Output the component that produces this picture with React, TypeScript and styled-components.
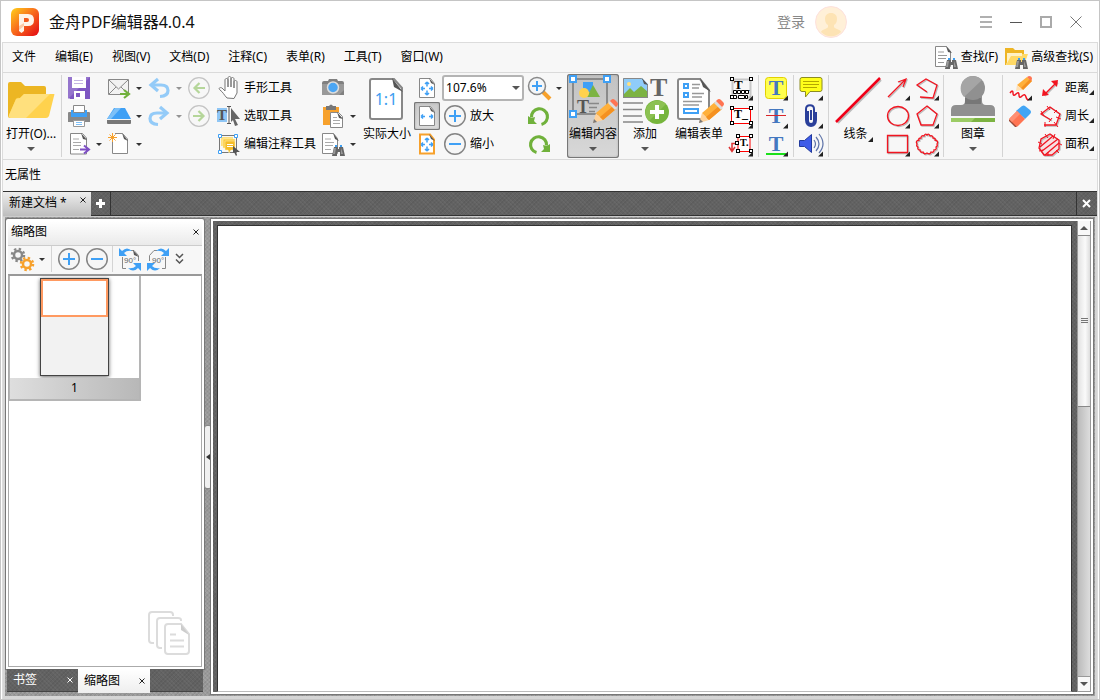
import React from "react";
import styled, { createGlobalStyle, css } from "styled-components";

const Global = createGlobalStyle`
  * { box-sizing: border-box; }
  body {
    margin: 0;
    font: 12px/16px "Noto Sans", "Noto Sans CJK SC", sans-serif;
    color: #000;
    background: #fff;
  }
  button, select {
    font: inherit;
    color: inherit;
    border: 0;
    padding: 0;
    margin: 0;
    background: none;
  }
  svg { display: block; flex: none; }
`;

const darkWeave = css`
  background:
    repeating-linear-gradient(45deg, rgba(255, 255, 255, 0.04) 0 1px, transparent 1px 3px),
    repeating-linear-gradient(-45deg, rgba(0, 0, 0, 0.06) 0 1px, transparent 1px 3px),
    #626262;
`;

const lightWeave = css`
  background:
    repeating-linear-gradient(45deg, rgba(255, 255, 255, 0.09) 0 1px, transparent 1px 3px),
    repeating-linear-gradient(-45deg, rgba(0, 0, 0, 0.07) 0 1px, transparent 1px 3px),
    #999;
`;

/* ---------- window ---------- */

const Frame = styled.div`
  display: flex;
  flex-direction: column;
  min-height: 100vh;
  border: 1px solid #c5c5c5;
  background: #fff;
`;

const TitleBar = styled.header`
  display: flex;
  align-items: center;
  height: 41px;
  padding: 0 8px 0 10px;
`;

const Title = styled.h1`
  flex: 1;
  margin: 0 0 0 10px;
  font-size: 16px;
  line-height: 24px;
  font-weight: 400;
  color: #111;
`;

const Account = styled.button`
  display: flex;
  align-items: center;
  gap: 10px;
  margin-right: 124px;
  font-size: 14px;
  line-height: 20px;
  color: #888;
`;

const WindowButton = styled.button`
  display: grid;
  place-items: center;
  width: 30px;
  height: 30px;
`;

const Body = styled.div`
  flex: 1;
  display: flex;
  flex-direction: column;
  margin: 0 1px;
  border: 1px solid #dcdcdc;
  border-bottom: 0;
`;

const MenuBar = styled.nav`
  display: flex;
  align-items: center;
  height: 30px;
  padding: 0 4px 0 9px;
  background: #f7f7f7;
  border-bottom: 1px solid #dadada;
`;

const MenuItem = styled.button`
  height: 28px;
  margin-right: 19px;
  padding-bottom: 2px;
  white-space: nowrap;
`;

const SearchButton = styled.button`
  display: flex;
  align-items: center;
  gap: 2px;
  height: 28px;
  margin-left: 5px;
  padding-bottom: 2px;
  white-space: nowrap;
`;

const Spacer = styled.div`
  flex: 1;
`;

/* ---------- ribbon ---------- */

const Ribbon = styled.div`
  display: flex;
  height: 87px;
  padding: 1px 2px 0 1px;
  background: #f7f7f7;
  border-bottom: 1px solid #dadada;
`;

const Column = styled.div<{ $gap?: number }>`
  display: flex;
  flex-direction: column;
  flex: none;
  margin-left: ${(p) => p.$gap ?? 0}px;
`;

const Row = styled.div`
  display: flex;
  align-items: center;
  height: 28px;
`;

const Tool = styled.button<{ $active?: boolean }>`
  display: flex;
  align-items: center;
  gap: 2px;
  height: 28px;
  white-space: nowrap;
  border-radius: 2px;
  ${(p) =>
    p.$active &&
    css`
      background: linear-gradient(#c9c9c9, #ddd);
      box-shadow: inset 0 0 0 1px #777, inset 0 0 3px #777;
    `}
`;

const Arrow = styled.button<{ $off?: boolean }>`
  display: grid;
  place-items: center;
  width: 14px;
  height: 28px;
  opacity: ${(p) => (p.$off ? 0.5 : 1)};
`;

const BigTool = styled.button<{ $width: number; $gap?: number; $active?: boolean }>`
  display: flex;
  flex-direction: column;
  align-items: center;
  flex: none;
  width: ${(p) => p.$width}px;
  height: 84px;
  margin-left: ${(p) => p.$gap ?? 0}px;
  white-space: nowrap;
  border-radius: 3px;
  ${(p) =>
    p.$active &&
    css`
      background: linear-gradient(#c2c2c2, #d8d8d8);
      box-shadow: inset 0 0 0 1px #777, inset 0 0 3px #888;
    `}
`;

const BigLabel = styled.span`
  display: flex;
  justify-content: center;
  align-items: flex-end;
  height: 16px;
  margin-bottom: 5px;
`;

const Divider = styled.div<{ $gap: number }>`
  flex: none;
  width: 1px;
  height: 82px;
  margin: 1px 0 0 ${(p) => p.$gap}px;
  background: #d4d4d4;
`;

const ZoomBox = styled.div`
  display: flex;
  align-items: center;
  width: 82px;
  height: 26px;
  padding-right: 2px;
  background: #fff;
  border: 2px solid #b4b4b4;
  border-radius: 3px;
`;

const ZoomSelect = styled.select`
  flex: 1;
  min-width: 0;
  appearance: none;
  padding-left: 2px;
  font-size: 12px;
  outline: 0;
`;

const PropertyBar = styled.div`
  height: 31px;
  padding: 7px 2px;
  background: #f7f7f7;
`;

/* ---------- document tabs ---------- */

const TabBar = styled.div`
  display: flex;
  height: 25px;
  padding-right: 1px;
  border-top: 1px solid #333;
  border-bottom: 1px solid #333;
  ${darkWeave}
`;

const DocTab = styled.div`
  display: flex;
  align-items: flex-start;
  justify-content: space-between;
  width: 88px;
  height: 24px;
  padding: 3px 4px 0 6px;
  background: linear-gradient(#eee, #bdbdbd);
`;

const TabLabel = styled.button`
  white-space: nowrap;
`;

const TabAction = styled.button<{ $side: "left" | "right" }>`
  display: grid;
  place-items: center;
  width: 20px;
  border-${(p) => (p.$side === "left" ? "right" : "left")}: 1px solid #333;
`;

/* ---------- workspace ---------- */

const Workspace = styled.main`
  flex: 1;
  display: flex;
  padding: 2px 4px 5px 3px;
  border-top: 1px solid #ccc;
  box-shadow: inset 2px 0 0 #d5d5d5, inset -2px -3px 0 #d5d5d5;
  ${lightWeave}
`;

const SidePanel = styled.aside`
  display: flex;
  flex-direction: column;
  width: 198px;
  margin-bottom: 2px;
`;

const PanelBox = styled.section`
  flex: 1;
  display: flex;
  flex-direction: column;
  border: 2px solid #fff;
  background: #f7f7f7;
  box-shadow: 0 0 0 1px #777;
  border-radius: 2px 2px 0 0;
`;

const PanelHeader = styled.div`
  display: flex;
  align-items: center;
  justify-content: space-between;
  height: 24px;
  padding: 0 2px 2px 3px;
  background: linear-gradient(#fff, #eaeaea);
`;

const PanelTitle = styled.h2`
  margin: 0;
  font-size: 12px;
  line-height: 16px;
  font-weight: 400;
`;

const CloseButton = styled.button`
  display: grid;
  place-items: center;
  width: 9px;
  height: 10px;
`;

const PanelTools = styled.div`
  display: flex;
  align-items: center;
  height: 29px;
  padding: 0 0 2px 1px;
  border-top: 1px solid #ccc;
`;

const ToolDivider = styled.div`
  width: 1px;
  height: 26px;
  margin: 0 4px 0 2px;
  background: #d4d4d4;
`;

const Thumbnails = styled.div`
  flex: 1;
  display: flex;
  flex-direction: column;
  align-items: flex-start;
  justify-content: space-between;
  border: 1px solid #aaa;
  border-top: 2px solid #999;
  background: #fff;
`;

const Thumb = styled.button`
  display: flex;
  flex-direction: column;
  align-items: center;
  width: 132px;
  height: 125px;
  padding-top: 2px;
  border: solid #b5b5b5;
  border-width: 0 2px 2px 1px;
`;

const ThumbPage = styled.span`
  width: 69px;
  height: 98px;
  border: 1px solid #444;
  background: #f2f2f2;
  box-shadow: 0 1px 4px rgba(0, 0, 0, 0.6);
`;

const ThumbView = styled.span`
  display: block;
  height: 38px;
  border: 2px solid #ff9a61;
  background: #fff;
`;

const ThumbNumber = styled.span`
  align-self: stretch;
  height: 21px;
  margin-top: auto;
  padding-top: 2px;
  text-align: center;
  background: linear-gradient(90deg, #dedede, #b8b8b8);
`;

const PagesMark = styled.div`
  align-self: flex-end;
  padding: 0 10px 10px 0;
`;

const SideTabs = styled.div`
  display: flex;
  height: 23px;
  margin: 0 1px;
  border-bottom: 1px solid #444;
  ${darkWeave}
`;

const SideTab = styled.div<{ $active?: boolean }>`
  display: flex;
  align-items: center;
  justify-content: space-between;
  width: ${(p) => (p.$active ? 72 : 71)}px;
  height: ${(p) => (p.$active ? 24 : 22)}px;
  padding: 0 4px 0 6px;
  color: ${(p) => (p.$active ? "#000" : "#fff")};
  background: ${(p) => (p.$active ? "linear-gradient(#fff, #eee)" : "none")};
`;

const Splitter = styled.div`
  display: flex;
  align-items: center;
  justify-content: flex-end;
  width: 7px;
`;

const SplitHandle = styled.button`
  display: grid;
  place-items: center;
  width: 6px;
  height: 62px;
  border-radius: 2px;
  background: #f0f0f0;
  box-shadow: 0 0 0 1px #888;
`;

const DocPane = styled.section`
  flex: 1;
  display: flex;
  border: 2px solid #fff;
  box-shadow: 0 0 0 1px #777;
`;

const Canvas = styled.div`
  flex: 1;
  display: flex;
  padding: 4px 5px 0 4px;
  ${darkWeave}
`;

const Page = styled.div`
  flex: 1;
  border: 1px solid #333;
  border-bottom-color: #bbb;
  background: #fff;
`;

const ScrollBar = styled.div`
  display: flex;
  flex-direction: column;
  width: 14px;
  border: 1px solid #999;
  border-top: 0;
  background: linear-gradient(90deg, #bbb, #ddd);
`;

const ScrollButton = styled.button`
  display: grid;
  place-items: center;
  height: 14px;
  background: #f8f8f8;
`;

const ScrollTrack = styled.div`
  flex: 1;
  border-bottom: 1px solid #999;
`;

const ScrollThumb = styled.div`
  display: grid;
  place-items: center;
  height: 172px;
  border: solid #888;
  border-width: 1px 0;
  background: linear-gradient(90deg, #e2e2e2, #fafafa 60%, #ddd);
`;

/* ---------- icons ---------- */

const RED = "#f21420";

type Kids = { children?: React.ReactNode };

const Small = ({ children }: Kids) => (
  <svg width="26" height="26" viewBox="0 0 26 26" fill="none" aria-hidden="true">
    {children}
  </svg>
);

const Big = ({ children }: Kids) => (
  <svg width="50" height="52" viewBox="0 0 50 52" fill="none" aria-hidden="true">
    {children}
  </svg>
);

/* red outline with its soft grey shadow */
const RedLine = ({ d, width = 1.3 }: { d: string; width?: number }) => (
  <>
    <path d={d} stroke="#bbb" strokeWidth={width} transform="translate(1 1)" />
    <path d={d} stroke={RED} strokeWidth={width} />
  </>
);

const Down = () => (
  <svg width="8" height="4" viewBox="0 0 8 4" aria-hidden="true">
    <path d="M0 0h8L4 4z" fill="#555" />
  </svg>
);

const TinyDown = () => (
  <svg width="6" height="3" viewBox="0 0 6 3" aria-hidden="true">
    <path d="M0 0h6L3 3z" fill="#333" />
  </svg>
);

const Cross = ({ color = "#222" }: { color?: string }) => (
  <svg width="6" height="6" viewBox="0 0 6 6" aria-hidden="true">
    <path d="M.5.5l5 5M5.5.5l-5 5" stroke={color} />
  </svg>
);

const Corner = () => <path d="M25 20.500v5h-5z" fill="#222" />;

const Binoculars = ({ x = 0, y = 0 }: { x?: number; y?: number }) => (
  <g transform={`translate(${x} ${y})`}>
    <path d="M3 0h2v2H3zM8 0h2v2H8z" fill="#3d9df0" />
    <path d="M2 2h4v2h1V2h4l2 9H8V7H5v4H0z" fill="#666" />
    <path d="M2 3h2L3 9H1zM9 3l2 6H9z" fill="#999" />
  </g>
);

const Sheet = () => (
  <>
    <path d="M4.500 2.500h12l4 4.500v16h-16z" fill="#fff" stroke="#888" />
    <path d="M15 2l6 7-4-1z" fill="#555" />
  </>
);

const TextLines = () => <path d="M7 8h6M7 11.500h8M7 14.500h8M7 18.500h6" stroke="#aaa" />;

const Pencil = () => (
  <g>
    <path d="M25 49l3-10 7 7z" fill="#ffd29a" />
    <path d="M25 49l1-4 3 3z" fill="#777" />
    <path d="M28 39l13-11 7 7-13 11z" fill="#ffb03b" />
    <path d="M32 43l13-11 3 3-13 11z" fill="#f59120" />
    <path d="M40 29l2-2 7 7-2 2z" fill="#ddd" />
    <path d="M42 27l1-1q2-2 4 0l2 2q2 2 0 4l-1 1z" fill="#ff7452" />
  </g>
);

const FitPage = ({ frame, wide }: { frame?: boolean; wide?: boolean }) => (
  <Small>
    {frame ? (
      <path d="M6 3.500h10l4 5v14H6z" fill="#fff" stroke="#f7a12c" strokeWidth="2" />
    ) : (
      <path d="M5.500 3.500h11l4 5v14h-15z" fill="#fff" stroke="#888" />
    )}
    <path d="M15 3l6 7-4-2z" fill="#555" />
    <path d="M11 13.500H7m0 0l2-2m-2 2l2 2M15 13.500h4m0 0l-2-2m2 2l-2 2" stroke="#3fa0f5" strokeWidth="1.500" />
    {!wide && (
      <path d="M13 11.500V7m0 0l-2 2m2-2l2 2M13 15.500V20m0 0l-2-2m2 2l2-2" stroke="#3fa0f5" strokeWidth="1.500" />
    )}
  </Small>
);

const CircleSign = ({ plus }: { plus?: boolean }) => (
  <Small>
    <circle cx="13" cy="13" r="10.300" fill="#f6f6f6" stroke="#858585" strokeWidth="1.500" />
    <path d={plus ? "M7 13h12M13 7v12" : "M7 13h12"} stroke="#3fa0f5" strokeWidth="2" />
  </Small>
);

const NavCircle = ({ back }: { back?: boolean }) => (
  <Small>
    <circle cx="13" cy="13" r="10.300" stroke="#c4c4c4" strokeWidth="1.200" />
    <path
      d={back ? "M19 13H8.500m5-5l-5 5 5 5" : "M7 13h10.500m-5-5l5 5-5 5"}
      stroke="#b5d69a"
      strokeWidth="2.200"
    />
  </Small>
);

const Undo = ({ flip }: { flip?: boolean }) => (
  <Small>
    <g transform={flip ? "translate(26 0) scale(-1 1)" : undefined}>
      <path d="M5 10h10q7 0 7 5.500t-8 6" stroke="#94cbf8" strokeWidth="3.200" />
      <path d="M12 4L5 10l7 6" stroke="#94cbf8" strokeWidth="3.200" />
    </g>
  </Small>
);

const Rotate = ({ flip }: { flip?: boolean }) => (
  <Small>
    <g transform={flip ? "translate(26 0) scale(-1 1)" : undefined}>
      <path d="M15.500 21.500a8 8 0 1 0-10-7" stroke="#70b13b" strokeWidth="3.200" />
      <path d="M2 13v8h9l-3-3 1-4-4 1z" fill="#70b13b" />
    </g>
  </Small>
);

const Marks = ({ points }: { points: number[][] }) => (
  <>
    {points.map(([x, y]) => (
      <rect key={`${x}-${y}`} x={x - 1.5} y={y - 1.5} width="3" height="3" fill="#fff" stroke="#000" />
    ))}
  </>
);

const RibbonT = () => (
  <text
    x="13"
    y="20"
    textAnchor="middle"
    fill="#4478c0"
    fontFamily="Liberation Serif, serif"
    fontWeight="700"
    fontSize="22"
  >
    T
  </text>
);

const SerifText = ({ x, y, size, color = "#000", children }: { x: number; y: number; size: number; color?: string } & Kids) => (
  <text x={x} y={y} fill={color} fontFamily="Liberation Serif, serif" fontWeight="700" fontSize={size}>
    {children}
  </text>
);

const Magnifier = () => (
  <Small>
    <path d="M17 17l7 7" stroke="#f7a12c" strokeWidth="4" />
    <circle cx="11" cy="11" r="8.500" fill="#f4f6f8" stroke="#888" strokeWidth="1.500" />
    <path d="M6 11h10M11 6v10" stroke="#3fa0f5" strokeWidth="2" />
  </Small>
);

const RotatePage = ({ right }: { right?: boolean }) => (
  <Small>
    <g transform={right ? "translate(26 0) scale(-1 1)" : undefined}>
      <path d="M5.500 11v11.500H9M14 4.500h3l4.500 5V15" stroke="#888" />
      <path d="M15 5Q10 0 5 5L2 2v8h8L7 7q3-3 8-2z" fill="#3fa0f5" />
      <path d="M11 22q5 5 10 0l3 3v-8h-8l3 3q-3 3-8 2z" fill="#3fa0f5" />
    </g>
    {!right && <path d="M16 4l6 7-5-2z" fill="#555" />}
    <text x="7" y="17" fill="#666" fontFamily="Liberation Sans, sans-serif" fontSize="8">
      90°
    </text>
  </Small>
);

const Gear = ({ x, y, color }: { x: number; y: number; color: string }) => (
  <g transform={`translate(${x} ${y})`} stroke={color}>
    <circle r="4" strokeWidth="2.500" />
    <circle r="6" strokeWidth="2.500" strokeDasharray="2.350 2.360" />
  </g>
);

const Logo = () => (
  <svg width="28" height="28" viewBox="0 0 28 28" aria-hidden="true">
    <defs>
      <linearGradient id="logo" x1="0" y1="0" x2="1" y2="1">
        <stop offset="0" stopColor="#ffd21a" />
        <stop offset=".45" stopColor="#f9711c" />
        <stop offset="1" stopColor="#e30613" />
      </linearGradient>
    </defs>
    <rect width="28" height="28" rx="6" fill="url(#logo)" />
    <path d="M8 6h9q6 0 6 6t-6 6h-4v5l-2.500 2L8 23z" fill="#fff3e8" />
    <path d="M13 10h3q2 0 2 2t-2 2h-3z" fill="#f2591d" />
    <path d="M8 18l5-3v3l-5 4z" fill="#fbc9a6" />
  </svg>
);

const Avatar = () => (
  <svg width="32" height="32" viewBox="0 0 32 32" aria-hidden="true">
    <circle cx="16" cy="16" r="15.500" fill="#fff0d8" stroke="#fde0dc" />
    <path d="M16 7c4 0 6 2.500 6 6s-1.500 5-3 6v2c1 2 6 2 7 5a14 14 0 0 1-20 0c1-3 6-3 7-5v-2c-1.500-1-3-2.500-3-6s2-6 6-6z" fill="#fde3b4" />
  </svg>
);

const menus = ["文件", "编辑(E)", "视图(V)", "文档(D)", "注释(C)", "表单(R)", "工具(T)", "窗口(W)"];

export default function App() {
  return (
    <>
      <Global />
      <Frame>
        <TitleBar>
          <Logo />
          <Title>金舟PDF编辑器4.0.4</Title>
          <Account>
            登录
            <Avatar />
          </Account>
          <WindowButton aria-label="菜单">
            <svg width="12" height="12" viewBox="0 0 12 12">
              <path d="M0 1h12M0 6h12M0 11h12" stroke="#b0b0b0" strokeWidth="2" />
            </svg>
          </WindowButton>
          <WindowButton aria-label="最小化">
            <svg width="12" height="12" viewBox="0 0 12 12">
              <path d="M0 6.500h12" stroke="#555" />
            </svg>
          </WindowButton>
          <WindowButton aria-label="最大化">
            <svg width="12" height="12" viewBox="0 0 12 12">
              <path d="M1 1h10v10H1z" fill="none" stroke="#aaa" strokeWidth="2" />
            </svg>
          </WindowButton>
          <WindowButton aria-label="关闭">
            <svg width="12" height="12" viewBox="0 0 12 12">
              <path d="M.5.5l11 11M11.500.5l-11 11" stroke="#777" />
            </svg>
          </WindowButton>
        </TitleBar>

        <Body>
          <MenuBar>
            {menus.map((m) => (
              <MenuItem key={m}>{m}</MenuItem>
            ))}
            <Spacer />
            <SearchButton>
              <Small>
                <path d="M2.500 2.500h11l4 5v15h-15z" fill="#fff" stroke="#888" />
                <path d="M13 2l6 7-4-1z" fill="#555" />
                <path d="M5 8h6M5 11.500h9M5 14.500h8M5 18.500h6" stroke="#999" />
                <Binoculars x={12} y={14} />
              </Small>
              查找(F)
            </SearchButton>
            <SearchButton>
              <Small>
                <path d="M2 4h8l2 2h9v4H7L3 21H2z" fill="#eeb524" />
                <path d="M3 21L8 10h17l-4 11z" fill="#ffd966" />
                <path d="M4 9h15v3H8l-4 7z" fill="#fff1c4" />
                <Binoculars x={12} y={14} />
              </Small>
              高级查找(S)
            </SearchButton>
          </MenuBar>

          <Ribbon>
            <BigTool $width={54}>
              <Big>
                <path d="M2 10q0-2 2-2h11l4 4h19q2 0 2 2v30H4q-2 0-2-2z" fill="#ecb623" />
                <path d="M14 24l4-4h30q1 0 0 2l-5 20q-1 2-3 2H5q-3 0-2-3l7-16q1-2 4-1z" fill="#ffd24d" />
                <path d="M14 24l4-4h26L20 44H5q-3 0-2-3l7-16z" fill="#ffe07d" />
              </Big>
              <BigLabel>打开(O)...</BigLabel>
              <Down />
            </BigTool>
            <Divider $gap={3} />

            <Column $gap={4}>
              <Row>
                <Tool aria-label="保存">
                  <Small>
                    <path d="M2 2h22v22H4l-2-2z" fill="#7e57c2" />
                    <path d="M2 2h22L2 24z" fill="#9575cd" />
                    <path d="M6 2h14v11H6zM8 16h11v8H8z" fill="#fff" />
                    <path d="M8 5.500h9M8 8.500h9" stroke="#c4b5e3" />
                    <path d="M10 18h4v4h-4z" fill="#7e57c2" />
                  </Small>
                </Tool>
              </Row>
              <Row>
                <Tool aria-label="打印">
                  <Small>
                    <path d="M3 9h20q1 0 1 1v9H2v-9q0-1 1-1z" fill="#888" />
                    <path d="M5 7h16v7H5z" fill="#3fa0f5" />
                    <path d="M7.500 2.500h11v7h-11z" fill="#fff" stroke="#888" />
                    <path d="M7.500 17.500h11v6h-11z" fill="#fff" stroke="#999" />
                    <path d="M10 19.500h6M10 21.500h6" stroke="#7fc0f7" />
                  </Small>
                </Tool>
              </Row>
              <Row>
                <Tool aria-label="导出">
                  <Small>
                    <Sheet />
                    <TextLines />
                    <path d="M14 18.500h8m-4-4l5 4-5 4" stroke="#7e4fc4" strokeWidth="2" />
                  </Small>
                </Tool>
                <Arrow aria-label="导出选项">
                  <TinyDown />
                </Arrow>
              </Row>
            </Column>

            <Column>
              <Row>
                <Tool aria-label="邮件">
                  <Small>
                    <path d="M2.500 4.500h20v15h-20z" fill="#f2f2f2" stroke="#888" />
                    <path d="M3 5l9.500 9L22 5M3 19l7-7M22 19l-7-7" stroke="#888" />
                    <path d="M14 19h8m-4-4l5 4-5 4" stroke="#70b13b" strokeWidth="2.200" />
                  </Small>
                </Tool>
                <Arrow aria-label="邮件选项">
                  <TinyDown />
                </Arrow>
              </Row>
              <Row>
                <Tool aria-label="扫描">
                  <Small>
                    <path d="M8 5h11l6 11H1z" fill="#3fa0f5" />
                    <path d="M9 5h6L5 16H1z" fill="#7cc0f8" />
                    <path d="M1 17h24v3q0 1-1 1H2q-1 0-1-1z" fill="#777" />
                  </Small>
                </Tool>
                <Arrow aria-label="扫描选项">
                  <TinyDown />
                </Arrow>
              </Row>
              <Row>
                <Tool aria-label="新建">
                  <Small>
                    <path d="M6.500 8v14.500h15V8l-5-5.500H9" fill="#fff" stroke="#888" />
                    <path d="M16 2l6 8-4-2z" fill="#555" />
                    <path d="M6.500 2v9M2 6.500h9M3.500 3.500l6 6M9.500 3.500l-6 6" stroke="#f7a12c" />
                  </Small>
                </Tool>
                <Arrow aria-label="新建选项">
                  <TinyDown />
                </Arrow>
              </Row>
            </Column>

            <Column>
              <Row>
                <Tool aria-label="撤销">
                  <Undo />
                </Tool>
                <Arrow $off aria-label="撤销选项">
                  <TinyDown />
                </Arrow>
              </Row>
              <Row>
                <Tool aria-label="重做">
                  <Undo flip />
                </Tool>
                <Arrow $off aria-label="重做选项">
                  <TinyDown />
                </Arrow>
              </Row>
            </Column>

            <Column>
              <Tool aria-label="后退">
                <NavCircle back />
              </Tool>
              <Tool aria-label="前进">
                <NavCircle />
              </Tool>
            </Column>

            <Column $gap={4}>
              <Tool>
                <Small>
                  <path
                    d="M11 23c-3-3-4-6-7-8-2-2 0-3 2-2l3 3V5c0-2 3-2 3 0v7V3c0-2 3-2 3 0v9V4c0-2 3-2 3 0v9V7c0-2 3-2 3 0v11l-3 5.500z"
                    fill="#fff"
                    stroke="#777"
                  />
                </Small>
                手形工具
              </Tool>
              <Tool>
                <Small>
                  <path d="M1 5h10v14H1z" fill="#8fc6f5" />
                  <SerifText x={1} y={17} size={15} color="#555">
                    T
                  </SerifText>
                  <path d="M11 3.500h4M11 20.500h4M13 4v16" stroke="#555" />
                  <path d="M15 5l9 11h-5l3 6-3 1-2-6-2 2z" fill="#666" />
                </Small>
                选取工具
              </Tool>
              <Tool>
                <Small>
                  <path d="M3.500 4.500h17v17h-17z" stroke="#777" />
                  <path d="M5 6h12v9H5z" fill="#ffe07d" />
                  <path d="M7 8h12v9H7z" fill="#fbcb3f" stroke="#fff3c0" strokeWidth=".5" />
                  <path d="M9 10h10v9h-4l-2 3-1-3H9z" fill="#f6bd27" stroke="#fff3c0" strokeWidth=".5" />
                  <path d="M11 13.500h6M11 15.500h6" stroke="#fff" />
                  <path d="M17 15l7 6h-4l1 3-1 1-2-4-1 1z" fill="#555" />
                  <path d="M2.500 3.500h3v3h-3zM18.500 3.500h3v3h-3zM2.500 19.500h3v3h-3z" fill="#fff" stroke="#3fa0f5" />
                </Small>
                编辑注释工具
              </Tool>
            </Column>

            <Column $gap={4}>
              <Row>
                <Tool aria-label="快照">
                  <Small>
                    <path d="M2 8q0-2 2-2h4l1-2h8l1 2h4q2 0 2 2v12H2z" fill="#808080" />
                    <path d="M2 9h22v6l-5 5H2z" fill="#999" />
                    <circle cx="13" cy="12.500" r="5.500" fill="#4ba6f4" stroke="#ddd" strokeWidth="1.500" />
                  </Small>
                </Tool>
              </Row>
              <Row>
                <Tool aria-label="粘贴">
                  <Small>
                    <path d="M3 4h16v18H3z" fill="#f7a12c" />
                    <path d="M6 3h3q2-3 4 0h3v4H6z" fill="#777" />
                    <path d="M10.500 9.500h8l4 4v11h-12z" fill="#fff" stroke="#888" />
                    <path d="M17 9l6 7-4-1z" fill="#555" />
                    <path d="M13 14.500h4M13 17.500h7M13 20.500h7" stroke="#aaa" />
                  </Small>
                </Tool>
                <Arrow aria-label="粘贴选项">
                  <TinyDown />
                </Arrow>
              </Row>
              <Row>
                <Tool aria-label="查找">
                  <Small>
                    <path d="M2.500 2.500h11l4 5v15h-15z" fill="#fff" stroke="#888" />
                    <path d="M13 2l6 8-4-2z" fill="#555" />
                    <path d="M5 8h6M5 11.500h9M5 14.500h8M5 18.500h6" stroke="#aaa" />
                    <Binoculars x={12} y={14} />
                  </Small>
                </Tool>
                <Arrow aria-label="查找选项">
                  <TinyDown />
                </Arrow>
              </Row>
            </Column>

            <BigTool $width={50} $gap={2}>
              <Big>
                <path d="M10 5h22l8 9v29q0 2-2 2H10q-2 0-2-2V7q0-2 2-2z" fill="#fff" stroke="#888" strokeWidth="2" />
                <path d="M30 4l11 14-9-5z" fill="#555" />
                <text x="24" y="31" textAnchor="middle" fill="#3d9df0" fontFamily="Noto Sans, sans-serif" fontSize="16">
                  1:1
                </text>
              </Big>
              <BigLabel>实际大小</BigLabel>
            </BigTool>

            <Column $gap={2}>
              <Tool aria-label="适合页面">
                <FitPage />
              </Tool>
              <Tool $active aria-label="适合宽度">
                <FitPage wide />
              </Tool>
              <Tool aria-label="适合可见">
                <FitPage frame />
              </Tool>
            </Column>

            <Column $gap={2}>
              <Row>
                <ZoomBox>
                  <ZoomSelect aria-label="缩放比例" defaultValue="107.6%">
                    <option>107.6%</option>
                  </ZoomSelect>
                  <Down />
                </ZoomBox>
              </Row>
              <Tool>
                <CircleSign plus />
                放大
              </Tool>
              <Tool>
                <CircleSign />
                缩小
              </Tool>
            </Column>

            <Column $gap={2}>
              <Row>
                <Tool aria-label="放大镜">
                  <Magnifier />
                </Tool>
                <Arrow aria-label="放大镜选项">
                  <TinyDown />
                </Arrow>
              </Row>
              <Tool aria-label="逆时针旋转">
                <Rotate />
              </Tool>
              <Tool aria-label="顺时针旋转">
                <Rotate flip />
              </Tool>
            </Column>

            <BigTool $width={52} $gap={1} $active>
              <Big>
                <path d="M5 5h34v35H5z" stroke="#777" strokeWidth="1.500" />
                <path d="M15 8h10v10H15z" fill="#3fa0f5" />
                <path d="M25 11l7 12H19z" fill="#7cb342" />
                <circle cx="16" cy="19" r="5" fill="#ffd24d" />
                <SerifText x={9} y={39} size={18} color="#555">
                  T
                </SerifText>
                <path d="M21 29.500h10M21 33.500h8M21 37.500h6" stroke="#888" strokeWidth="1.500" />
                <path d="M2 2h6v6H2zM36 2h6v6h-6zM2 37h6v6H2z" fill="#fff" stroke="#3fa0f5" strokeWidth="2" />
                <Pencil />
              </Big>
              <BigLabel>编辑内容</BigLabel>
              <Down />
            </BigTool>

            <BigTool $width={50} $gap={1}>
              <Big>
                <path d="M3 4h19l6 6v14H3z" fill="#8fccf9" />
                <circle cx="9" cy="10" r="2" fill="#ffe07d" />
                <path d="M3 21l7-7 4 4 7-6 7 6v6H3z" fill="#7cb342" />
                <path d="M3.500 4.500h18l6 6v13h-24z" stroke="#888" />
                <path d="M22 4l6 7-4-1z" fill="#555" />
                <SerifText x={30} y={22} size={26} color="#666">
                  T
                </SerifText>
                <path d="M3 29h20M3 35.500h19M3 42h19M3 48h20" stroke="#888" strokeWidth="1.500" />
                <circle cx="37" cy="38" r="12" fill="#76b53c" />
                <path d="M29 47a12 12 0 0 1 17-17z" fill="#8cc152" />
                <path d="M30 38h14M37 31v14" stroke="#fff" strokeWidth="4" />
              </Big>
              <BigLabel>添加</BigLabel>
              <Down />
            </BigTool>

            <BigTool $width={52} $gap={3}>
              <Big>
                <path d="M6 5h20l9 11v27q0 2-2 2H6q-2 0-2-2V7q0-2 2-2z" fill="#fff" stroke="#888" strokeWidth="2" />
                <path d="M26 4l11 14-8-5z" fill="#555" />
                <path d="M10 10h4v4h-4zM10 19h4v4h-4zM10 35h14v4H10z" fill="#fff" stroke="#3fa0f5" strokeWidth="2" />
                <path d="M18 10.500h8M18 14h7M18 19.500h12M18 23h10M9 27.500h19M9 31h16" stroke="#999" strokeWidth="1.500" />
                <Pencil />
              </Big>
              <BigLabel>编辑表单</BigLabel>
            </BigTool>

            <Column $gap={3}>
              <Tool aria-label="打字机">
                <Small>
                  <path d="M4.500 4.500h18v18h-18z" stroke="#999" strokeWidth="2" strokeDasharray="1 1" />
                  <SerifText x={6} y={14} size={13}>
                    T_
                  </SerifText>
                  <path d="M5.500 15.500h3v3h-3zM9.500 15.500h3v3h-3zM13.500 15.500h3v3h-3zM17.500 15.500h3v3h-3zM5.500 20.500h3v3h-3zM10.500 20.500h6v3h-6zM17.500 20.500h2v3h-2z" fill="#fff" stroke="#000" />
                  <Marks points={[[4, 4], [23, 4], [4, 22]]} />
                  <Corner />
                </Small>
              </Tool>
              <Tool aria-label="文本框">
                <Small>
                  <path d="M3.500 5.500h19v15h-19z" fill="#fff" stroke="red" />
                  <SerifText x={6} y={15} size={12}>
                    T_
                  </SerifText>
                  <Marks points={[[4, 5], [23, 5], [4, 20], [23, 20]]} />
                  <Corner />
                </Small>
              </Tool>
              <Tool aria-label="标注">
                <Small>
                  <path d="M10 5.500h12v15H10z" fill="#fff" stroke="red" />
                  <path d="M9 12.500H4V20m-3-4l3 4.500L7 16" stroke="#d33" strokeWidth="1.500" />
                  <SerifText x={12} y={15} size={10}>
                    T.
                  </SerifText>
                  <Marks points={[[10, 5], [23, 5], [9, 12], [10, 20], [23, 20]]} />
                  <Corner />
                </Small>
              </Tool>
            </Column>
            <Divider $gap={4} />

            <Column $gap={4}>
              <Tool aria-label="高亮">
                <Small>
                  <rect x="2.500" y="2.500" width="21" height="21" rx="3" fill="#ffff4d" stroke="#e2d000" />
                  <RibbonT />
                  <Corner />
                </Small>
              </Tool>
              <Tool aria-label="删除线">
                <Small>
                  <RibbonT />
                  <path d="M3 12.500h20" stroke="#d9252a" />
                  <Corner />
                </Small>
              </Tool>
              <Tool aria-label="下划线">
                <Small>
                  <RibbonT />
                  <path d="M3 23h20" stroke="#1be01b" strokeWidth="2" />
                  <Corner />
                </Small>
              </Tool>
            </Column>
            <Divider $gap={4} />

            <Column $gap={4}>
              <Tool aria-label="附注">
                <Small>
                  <path d="M4 2.500h18q2 0 2 2v10q0 2-2 2H12L7.500 22v-5.500H4q-2 0-2-2v-10q0-2 2-2z" fill="#ffff1a" stroke="#8c8c20" />
                  <path d="M5 6.500h16M5 9.500h16M5 12.500h14" stroke="#b5a800" />
                  <Corner />
                </Small>
              </Tool>
              <Tool aria-label="附件">
                <Small>
                  <path d="M10 8v10c0 4 6 4 6 0V6c0-5-8-5-8 0v11c0 8 10 8 10 0V9M13 7v10" stroke="#2a3f9a" strokeWidth="2" />
                  <Corner />
                </Small>
              </Tool>
              <Tool aria-label="声音">
                <Small>
                  <path d="M1.500 9.500h5l7-6v18l-7-6h-5z" fill="#3e5be8" stroke="#223a9c" />
                  <path d="M16 9q3 4 0 8M18 6q6 7 0 14M21 3q8 10 0 19" stroke="#5f74a8" strokeWidth="1.200" />
                  <Corner />
                </Small>
              </Tool>
            </Column>
            <Divider $gap={4} />

            <BigTool $width={50} $gap={4}>
              <Big>
                <path d="M5 49L48 6" stroke="#bbb" strokeWidth="2" />
                <path d="M3 48L47 4" stroke="#f00018" strokeWidth="2.500" />
              </Big>
              <BigLabel>
                线条
                <svg width="5" height="5" viewBox="0 0 5 5">
                  <path d="M5 0v5H0z" fill="#222" />
                </svg>
              </BigLabel>
            </BigTool>

            <Column $gap={2}>
              <Tool aria-label="箭头">
                <Small>
                  <RedLine d="M3 22L21 4M13 7l8-3-3 8" />
                  <Corner />
                </Small>
              </Tool>
              <Tool aria-label="椭圆">
                <Small>
                  <RedLine d="M2.500 13a10.500 9.500 0 0 1 21 0a10.500 9.500 0 0 1-21 0z" />
                  <Corner />
                </Small>
              </Tool>
              <Tool aria-label="矩形">
                <Small>
                  <RedLine d="M2.500 4.500h20v17h-20z" />
                  <Corner />
                </Small>
              </Tool>
            </Column>

            <Column $gap={3}>
              <Tool aria-label="折线">
                <Small>
                  <RedLine d="M13 17L3 10l9-6 11 6-4 13-13-1" />
                  <Corner />
                </Small>
              </Tool>
              <Tool aria-label="多边形">
                <Small>
                  <RedLine d="M13 3l10 8-4 11H7L3 11z" />
                  <Corner />
                </Small>
              </Tool>
              <Tool aria-label="云形">
                <Small>
                  <RedLine d="M13 4q2-2 3 1q3-1 3 2q3 0 2 2q4 1 2 4q1 2-1 3q1 3-2 3q0 3-3 2q-1 3-4 1q-3 2-4-1q-3 1-3-2q-3 0-2-3q-2-1-1-3q-2-3 2-4q-1-2 2-2q0-3 3-2q1-3 3-1z" />
                  <Corner />
                </Small>
              </Tool>
            </Column>
            <Divider $gap={3} />

            <BigTool $width={50} $gap={4}>
              <Big>
                <path d="M17 22h17v5q0 4 4 4h4q5 0 5 5v6H3v-6q0-5 5-5h5q4 0 4-4z" fill="#909090" />
                <path d="M17 24h16v6H17z" fill="#777" />
                <circle cx="25" cy="14" r="12" fill="#909090" />
                <path d="M16 23A12 12 0 0 1 34 6z" fill="#a5a5a5" />
                <path d="M3 44h44v4H3z" fill="#7cb342" />
                <path d="M3 44h24l-4 4H3z" fill="#9ccc65" />
              </Big>
              <BigLabel>图章</BigLabel>
              <Down />
            </BigTool>
            <Divider $gap={4} />

            <Column $gap={4}>
              <Tool aria-label="铅笔">
                <Small>
                  <path d="M10 10L20 2l5 4-9 9z" fill="#ffb03b" />
                  <path d="M14 13L23 4l2 2-9 9z" fill="#f59120" />
                  <path d="M20 2l2-1q3 0 3 3l-1 2z" fill="#ff7452" />
                  <path d="M9 16l1-6 6 5z" fill="#ffe0b5" />
                  <path d="M3 18q3-4 3 0t3 1t3 1t3 1t4 1t4 2" stroke={RED} strokeWidth="1.500" />
                  <Corner />
                </Small>
              </Tool>
              <Tool aria-label="橡皮擦">
                <Small>
                  <path d="M15 3q2-1 3 0l5 4q2 2 0 4l-5 5-9-8z" fill="#42a5f5" />
                  <path d="M10 8l8 8-7 7q-1 1-3 0l-5-5q-1-2 0-3z" fill="#ff7452" />
                  <path d="M2 16l8 8-2 0-6-6z" fill="#9c4b38" />
                  <path d="M10 8l3 3-8 8-3-3z" fill="#ff8f73" />
                </Small>
              </Tool>
            </Column>

            <Column $gap={4}>
              <Tool>
                <Small>
                  <RedLine d="M7 20L20 7" width={1.5} />
                  <path d="M21 5l-1 7-6-6zM5 21l1-7 6 6z" fill={RED} />
                </Small>
                距离
              </Tool>
              <Tool>
                <Small>
                  <RedLine d="M14 17L4 11l9-7 10 7-4 11H7" />
                  <path d="M10 3l3 4M4 8l3 5M20 7l-3 3M19 14l5 2M15 15l-3 4M17 19l4 5M8 19v5" stroke={RED} />
                </Small>
                周长
              </Tool>
              <Tool>
                <Small>
                  <path d="M13 3l9 6v9l-7 6H7l-5-7 2-9z" fill="#f6e1e2" />
                  <RedLine d="M13 3l9 6v9l-7 6H7l-5-7 2-9z" />
                  <path d="M3 16L16 5M5 20L21 8M8 24L22 12" stroke={RED} strokeWidth="1.300" />
                  <path d="M8 3l3 4M18 3l-2 5M1 11l4 2M21 12l4 2M11 21v4M2 20l4-1M19 19l3 3" stroke={RED} />
                </Small>
                面积
              </Tool>
            </Column>
            <Column>
              {["距离选项", "周长选项", "面积选项"].map((label) => (
                <Tool key={label} aria-label={label}>
                  <svg width="6" height="26" viewBox="0 0 6 26">
                    <path d="M5 15v5H0z" fill="#222" />
                  </svg>
                </Tool>
              ))}
            </Column>
          </Ribbon>

          <PropertyBar>无属性</PropertyBar>

          <TabBar>
            <DocTab>
              <TabLabel>新建文档 *</TabLabel>
              <CloseButton aria-label="关闭文档">
                <Cross />
              </CloseButton>
            </DocTab>
            <TabAction $side="left" aria-label="新建标签">
              <svg width="9" height="9" viewBox="0 0 9 9">
                <path d="M4.500 0v9M0 4.500h9" stroke="#fff" strokeWidth="3" />
              </svg>
            </TabAction>
            <Spacer />
            <TabAction $side="right" aria-label="关闭全部">
              <svg width="9" height="9" viewBox="0 0 9 9">
                <path d="M1 1l7 7M8 1L1 8" stroke="#fff" strokeWidth="2" />
              </svg>
            </TabAction>
          </TabBar>

          <Workspace>
            <SidePanel>
              <PanelBox>
                <PanelHeader>
                  <PanelTitle>缩略图</PanelTitle>
                  <CloseButton aria-label="关闭缩略图">
                    <Cross />
                  </CloseButton>
                </PanelHeader>
                <PanelTools>
                  <Tool aria-label="设置">
                    <Small>
                      <Gear x={9} y={9} color="#888" />
                      <Gear x={18} y={18} color="#f7a12c" />
                    </Small>
                  </Tool>
                  <Arrow aria-label="设置选项">
                    <TinyDown />
                  </Arrow>
                  <ToolDivider />
                  <Tool aria-label="放大缩略图">
                    <CircleSign plus />
                  </Tool>
                  <Column $gap={2}>
                    <Tool aria-label="缩小缩略图">
                      <CircleSign />
                    </Tool>
                  </Column>
                  <ToolDivider />
                  <Tool aria-label="向左旋转页面">
                    <RotatePage />
                  </Tool>
                  <Column $gap={2}>
                    <Tool aria-label="向右旋转页面">
                      <RotatePage right />
                    </Tool>
                  </Column>
                  <Column $gap={4}>
                    <Tool aria-label="更多">
                      <svg width="9" height="12" viewBox="0 0 9 12" fill="none">
                        <path d="M1 1l3.500 3.500L8 1M1 6.500L4.500 10 8 6.500" stroke="#555" strokeWidth="1.500" />
                      </svg>
                    </Tool>
                  </Column>
                </PanelTools>
                <Thumbnails>
                  <Thumb>
                    <ThumbPage>
                      <ThumbView />
                    </ThumbPage>
                    <ThumbNumber>1</ThumbNumber>
                  </Thumb>
                  <PagesMark>
                    <svg width="43" height="45" viewBox="0 0 43 45" fill="none" stroke="#dcdcdc" strokeWidth="2">
                      <path d="M25 5V4q0-3-3-3H4Q1 1 1 4v25q0 3 3 3h2" />
                      <path d="M33 10V9q0-2-3-2H12q-3 0-3 3v24q0 3 3 3h2" />
                      <path d="M20 13h13l8 10v17q0 3-3 3H20q-3 0-3-3V16q0-3 3-3zM22 23.500h6M22 29.500h14M22 35.500h14" />
                      <path d="M33 13l8 11-8-5z" fill="#ccc" stroke="none" />
                    </svg>
                  </PagesMark>
                </Thumbnails>
              </PanelBox>
              <SideTabs>
                <SideTab>
                  <TabLabel>书签</TabLabel>
                  <CloseButton aria-label="关闭书签">
                    <Cross color="#fff" />
                  </CloseButton>
                </SideTab>
                <SideTab $active>
                  <TabLabel>缩略图</TabLabel>
                  <CloseButton aria-label="关闭缩略图标签">
                    <Cross />
                  </CloseButton>
                </SideTab>
              </SideTabs>
            </SidePanel>

            <Splitter>
              <SplitHandle aria-label="折叠面板">
                <svg width="4" height="6" viewBox="0 0 4 6">
                  <path d="M4 0v6L0 3z" fill="#333" />
                </svg>
              </SplitHandle>
            </Splitter>

            <DocPane>
              <Canvas>
                <Page />
              </Canvas>
              <ScrollBar>
                <ScrollButton aria-label="向上滚动">
                  <svg width="8" height="4" viewBox="0 0 8 4">
                    <path d="M0 4h8L4 0z" fill="#555" />
                  </svg>
                </ScrollButton>
                <ScrollTrack>
                  <ScrollThumb>
                    <svg width="7" height="6" viewBox="0 0 7 6">
                      <path d="M0 .5h7M0 2.500h7M0 4.500h7" stroke="#777" />
                    </svg>
                  </ScrollThumb>
                </ScrollTrack>
                <ScrollButton aria-label="向下滚动">
                  <Down />
                </ScrollButton>
              </ScrollBar>
            </DocPane>
          </Workspace>
        </Body>
      </Frame>
    </>
  );
}
